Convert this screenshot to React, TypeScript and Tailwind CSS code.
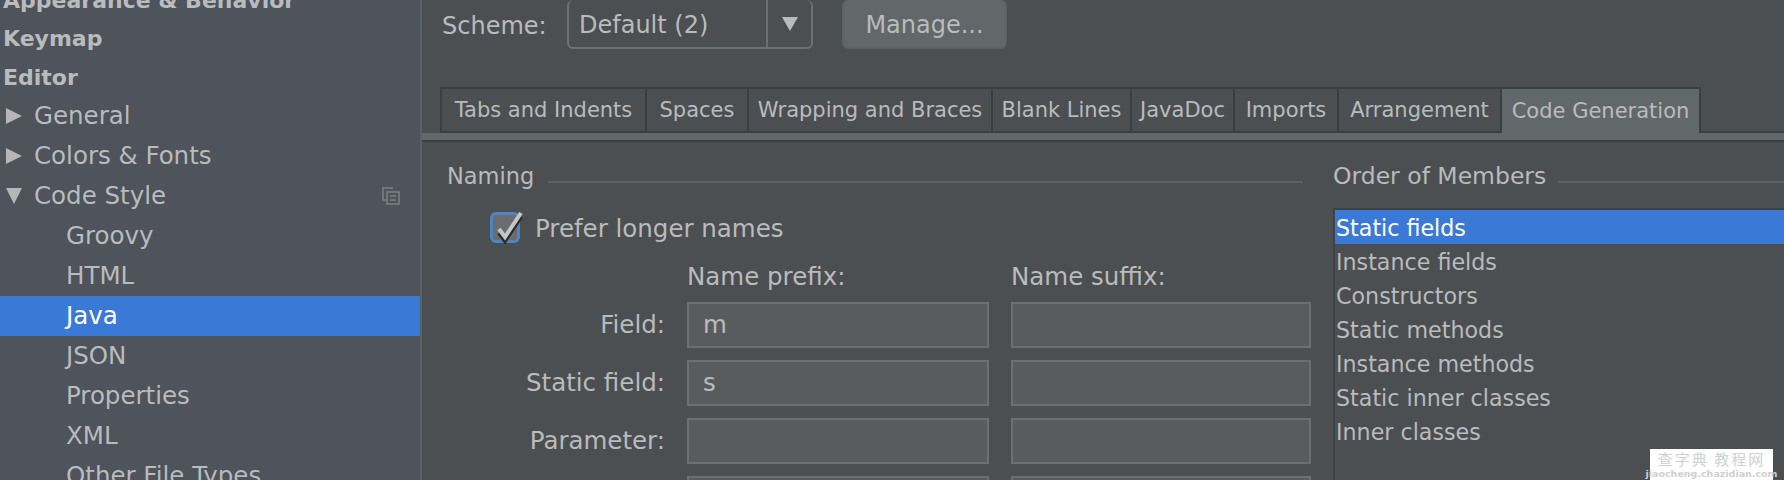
const font = "font-['DejaVu_Sans',sans-serif]";

const sidebarItems = [
  { label: "Appearance & Behavior", bold: true, h: "h-[38px]" },
  { label: "Keymap", bold: true, h: "h-[38px]" },
  { label: "Editor", bold: true, h: "h-[40px]" },
  { label: "General", arrow: "right", h: "h-[40px]" },
  { label: "Colors & Fonts", arrow: "right", h: "h-[40px]" },
  { label: "Code Style", arrow: "down", h: "h-[40px]", copy: true },
  { label: "Groovy", child: true, h: "h-[40px]" },
  { label: "HTML", child: true, h: "h-[40px]" },
  { label: "Java", child: true, selected: true, h: "h-[40px]" },
  { label: "JSON", child: true, h: "h-[40px]" },
  { label: "Properties", child: true, h: "h-[40px]" },
  { label: "XML", child: true, h: "h-[40px]" },
  { label: "Other File Types", child: true, h: "h-[40px]" },
];

const tabs = [
  { label: "Tabs and Indents", w: "w-[203px]" },
  { label: "Spaces", w: "w-[102px]" },
  { label: "Wrapping and Braces", w: "w-[244px]" },
  { label: "Blank Lines", w: "w-[139px]" },
  { label: "JavaDoc", w: "w-[103px]" },
  { label: "Imports", w: "w-[104px]" },
  { label: "Arrangement", w: "w-[163px]" },
  { label: "Code Generation", w: "w-[199px]", active: true },
];

const fields = [
  { label: "Field:", prefix: "m" },
  { label: "Static field:", prefix: "s" },
  { label: "Parameter:", prefix: "" },
  { label: "", prefix: "" },
];

const members = [
  "Static fields",
  "Instance fields",
  "Constructors",
  "Static methods",
  "Instance methods",
  "Static inner classes",
  "Inner classes",
];

function Arrow({ dir }: { dir: string }) {
  return (
    <svg width="16" height="16" viewBox="0 0 16 16" className="absolute left-[6px] top-[12px]">
      {dir === "right" ? (
        <path d="M0 0 L16 8 L0 16 Z" fill="#b4b6b8" />
      ) : (
        <path d="M0 0 L16 0 L8 16 Z" fill="#b4b6b8" />
      )}
    </svg>
  );
}

function CopyIcon() {
  return (
    <svg width="18" height="18" viewBox="0 0 18 18" className="absolute left-[382px] top-[11px]" fill="none" stroke="#7d8186" strokeWidth="1.5">
      <path d="M11 1 H1 V13 H4" />
      <rect x="5" y="5" width="12" height="12" />
      <path d="M8 9 H14 M8 13 H14" />
    </svg>
  );
}

function Checkbox() {
  return (
    <div className="relative w-[30px] h-[31px] rounded-[6px] border-[3px] border-[#4f83c2] bg-[#6a6d70] shrink-0">
      <svg width="36" height="36" viewBox="0 0 36 36" className="absolute left-[-3px] top-[-3px]" fill="none">
        <path d="M9 19 L15 27 L31 3" stroke="#2b2c2e" strokeWidth="4" transform="translate(0 2)" />
        <path d="M9 17 L15 25 L31 1" stroke="#c4c6c7" strokeWidth="4" />
      </svg>
    </div>
  );
}

export default function App() {
  return (
    <div className={`${font} flex w-[1784px] h-[480px] overflow-hidden bg-[#4c4f52] text-[#b9bbbc]`}>
      <aside className="w-[422px] h-full shrink-0 overflow-hidden bg-[#4e535c] border-r-2 border-[#5e6164]">
        <div className="-mt-[20px] text-[24.5px]">
          {sidebarItems.map((item) => (
            <div
              key={item.label}
              className={`relative flex items-center ${item.h} ${
                item.selected ? "bg-[#3b79d6] text-white" : ""
              } ${item.bold ? "pl-[3px] pt-[2px] text-[22px] font-bold" : item.child ? "pl-[66px]" : "pl-[34px]"}`}
            >
              {item.arrow && <Arrow dir={item.arrow} />}
              {item.label}
              {item.copy && <CopyIcon />}
            </div>
          ))}
        </div>
      </aside>

      <main className="flex-1 min-w-0 flex flex-col">
        <div className="flex items-center h-[49px] pl-[20px] text-[24px]">
          <span className="w-[125px] pt-[2px]">Scheme:</span>
          <div className="flex w-[246px] h-[49px] rounded-[6px] border-2 border-t-0 border-[#6d7072]">
            <div className="w-[199px] pl-[10px] pt-[2px] flex items-center border-r-2 border-[#6d7072]">Default (2)</div>
            <div className="flex-1 flex items-center justify-center">
              <svg width="16" height="14" viewBox="0 0 16 14">
                <path d="M0 0 H16 L8 14 Z" fill="#b9bbbc" />
              </svg>
            </div>
          </div>
          <button
            type="button"
            className="ml-[29px] w-[165px] h-[49px] pt-[2px] rounded-[6px] border-2 border-t-0 border-[#5d6164] bg-[#62676a] text-[#b9bbbc]"
          >
            Manage...
          </button>
        </div>

        <div className="flex h-[46px] mt-[38px] pl-[18px] text-[21px]">
          <div className="flex border-t-2 border-l-2 border-r-2 border-[#3c3f41]">
            {tabs.map((tab, i) => (
              <div
                key={tab.label}
                className={`${tab.w} pt-[2px] flex items-center justify-center ${
                  i > 0 ? "border-l-2 border-[#3c3f41]" : ""
                } ${tab.active ? "bg-[#62676a]" : "border-b-2"} border-[#3c3f41]`}
              >
                {tab.label}
              </div>
            ))}
          </div>
          <div className="flex-1 border-b-2 border-[#3c3f41]" />
        </div>
        <div className="h-[9px] shrink-0 bg-[#62676a] border-b-2 border-[#3c3f41]" />

        <div className="flex flex-1 min-h-0 pl-[25px] pt-[20px]">
          <section className="w-[886px] shrink-0">
            <div className="flex items-center h-[28px] w-[856px] gap-[14px] text-[22.5px]">
              <span className="pt-[2px]">Naming</span>
              <div className="flex-1 h-[2px] mt-[12px] bg-[#5e6164]" />
            </div>
            <div className="flex items-center h-[32px] mt-[21px] pl-[43px] gap-[15px] text-[24.5px]">
              <Checkbox />
              <span className="pt-[5px]">Prefer longer names</span>
            </div>
            <div className="flex h-[36px] mt-[15px] pl-[240px] pt-[2px] items-center text-[24.5px]">
              <span className="w-[324px]">Name prefix:</span>
              <span>Name suffix:</span>
            </div>
            <div className="mt-[8px] flex flex-col gap-[12px]">
              {fields.map((f, i) => (
                <div key={i} className="flex items-center text-[24.5px]">
                  <span className="w-[218px] pt-[1px] text-right">{f.label}</span>
                  <div className="ml-[22px] w-[302px] h-[46px] pl-[14px] pt-[1px] flex items-center bg-[#595c5d] border-2 border-[#6d7072]">
                    {f.prefix}
                  </div>
                  <div className="ml-[22px] w-[300px] h-[46px] bg-[#595c5d] border-2 border-[#6d7072]" />
                </div>
              ))}
            </div>
          </section>

          <section className="flex-1 min-w-0">
            <div className="flex items-center h-[28px] gap-[12px] text-[23.5px]">
              <span className="pt-[2px]">Order of Members</span>
              <div className="flex-1 h-[2px] mt-[12px] bg-[#5e6164]" />
            </div>
            <div className="relative mt-[18px] h-[300px] border-l-2 border-t-2 border-[#3f4143] text-[22.2px]">
              {members.map((m, i) => (
                <div
                  key={m}
                  className={`h-[34px] pl-[1px] pt-[3px] flex items-center ${i === 0 ? "bg-[#3b79d6] text-white" : ""}`}
                >
                  {m}
                </div>
              ))}
              <div className="absolute left-[315px] top-[239px] w-[123px] h-[40px] bg-white flex flex-col items-center text-[#cfcfcf]">
                <span className="text-[15px] leading-[20px] tracking-[2px] whitespace-nowrap font-['Noto_Sans_CJK_SC',sans-serif]">查字典 教程网</span>
                <span className="text-[9.5px] leading-[10px] whitespace-nowrap font-bold">jiaocheng.chazidian.com</span>
              </div>
            </div>
          </section>
        </div>
      </main>
    </div>
  );
}
